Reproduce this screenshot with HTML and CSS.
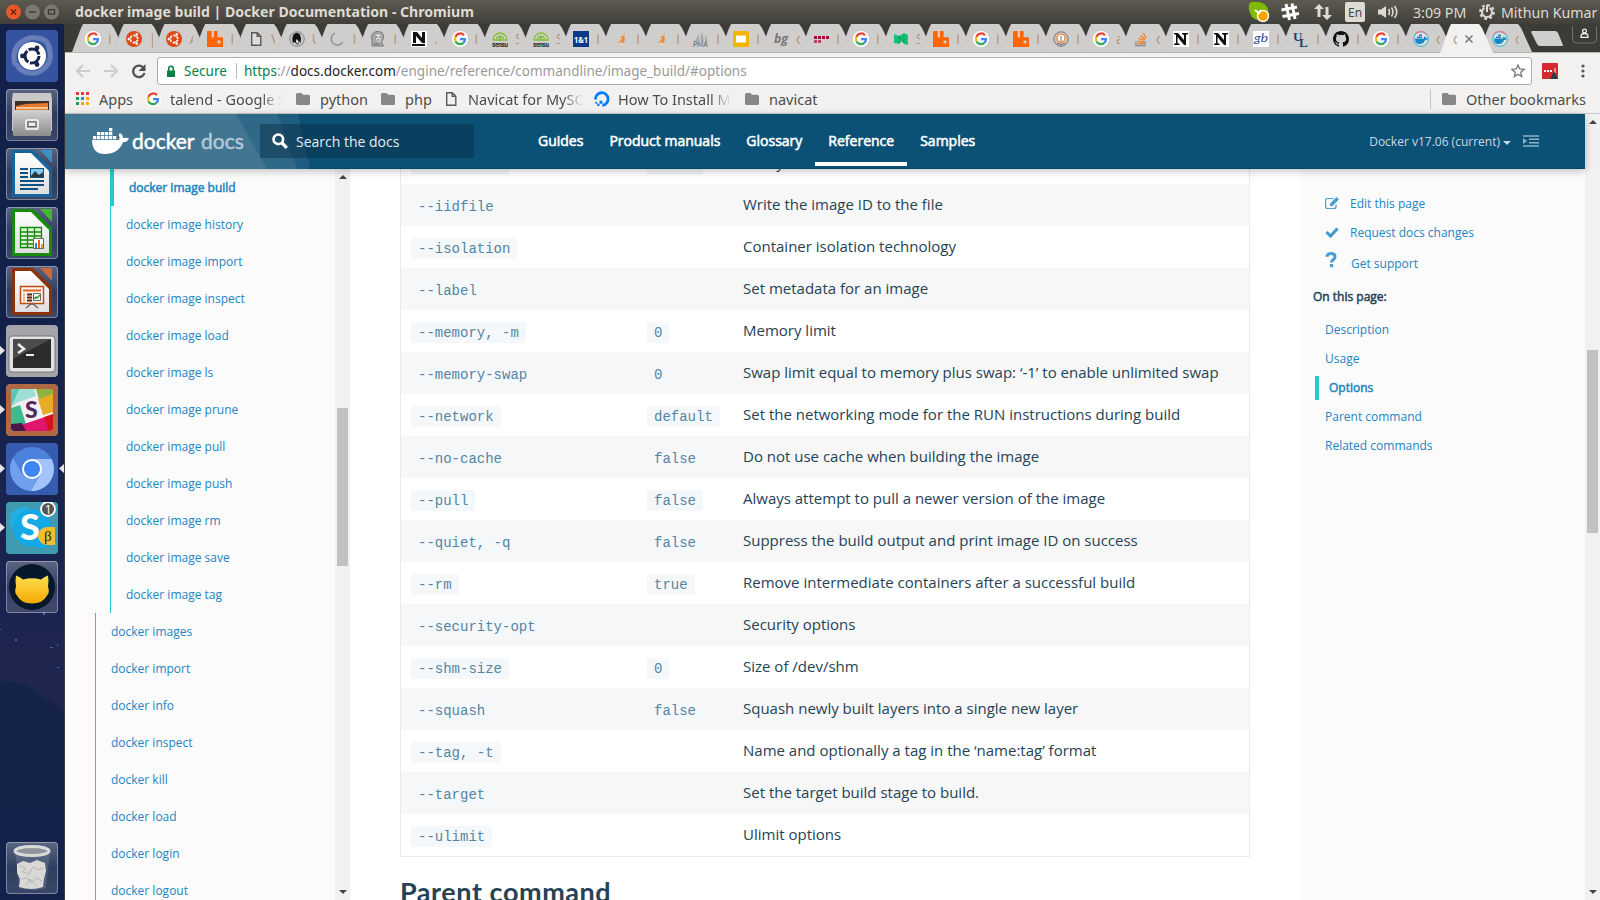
FILE: index.html
```html
<!DOCTYPE html>
<html lang="en">
<head>
<meta charset="utf-8">
<title>docker image build | Docker Documentation</title>
<link rel="stylesheet" href="styles.css">
</head>
<body>
<svg class="defs" width="0" height="0">
<defs>
<linearGradient id="metal" x1="0" y1="0" x2="0" y2="1"><stop offset="0" stop-color="#d2d2d2"/><stop offset="1" stop-color="#8c8c8c"/></linearGradient>
<linearGradient id="sheet" x1="0" y1="0" x2="0" y2="1"><stop offset="0" stop-color="#fff"/><stop offset="1" stop-color="#dedede"/></linearGradient>
<linearGradient id="gold" x1="0" y1="0" x2="0" y2="1"><stop offset="0" stop-color="#ffe050"/><stop offset="1" stop-color="#f5a800"/></linearGradient>
<symbol id="g" viewBox="0 0 16 16"><circle cx="8" cy="8" r="8" fill="#fff"/><g fill="none" stroke-width="2.3"><path d="M12 4.2A5 5 0 0 0 3.5 5.8" stroke="#ea4335"/><path d="M3.5 5.8a5 5 0 0 0 0 4.6" stroke="#fbbc05"/><path d="M3.5 10.4a5 5 0 0 0 7.8 1.5" stroke="#34a853"/><path d="M11.3 11.9A5 5 0 0 0 13 8.2H8" stroke="#4285f4"/></g></symbol>
<symbol id="ub" viewBox="0 0 16 16"><circle cx="8" cy="8" r="8" fill="#dd4814"/><circle cx="8" cy="8" r="3.7" fill="none" stroke="#fff" stroke-width="1.7" stroke-dasharray="6.4 1.35" stroke-dashoffset="-.7"/><g fill="#fff" stroke="#dd4814" stroke-width=".6"><circle cx="2.8" cy="8" r="1.6"/><circle cx="10.7" cy="3.4" r="1.6"/><circle cx="10.7" cy="12.6" r="1.6"/></g></symbol>
<symbol id="rb" viewBox="0 0 16 16"><path d="M1 0h3.6v6.6H7V0h3.6v6.2H16V16H0V1q0-1 1-1z" fill="#f60"/><rect x="10.5" y="9.5" width="3" height="3" rx=".8" fill="#d0cecd"/></symbol>
<symbol id="pg" viewBox="0 0 16 16"><path d="M3.7 1.7h5.6l3.5 3.5v9.1H3.7zM9.2 1.7v3.7h3.6" fill="#f3f3f3" fill-opacity=".4" stroke="#5a5a5a" stroke-width="1.4"/></symbol>
<symbol id="bird" viewBox="0 0 16 16"><circle cx="8" cy="8" r="7.3" fill="#c9c7c6" stroke="#888"/><path d="M4.500 3.500Q8 0 11 3.500l1 4-.5 4.500-1.500-2-1 4-3.500-3-1.500 1Q2.500 8 4.500 3.500z" fill="#111"/><path d="M7.500 8l2 2-1 3-1.500-2z" fill="#eee"/></symbol>
<symbol id="ld" viewBox="0 0 16 16"><path d="M6 2.2A6.2 6.2 0 1 0 13.8 11" fill="none" stroke="#999" stroke-width="1.7"/></symbol>
<symbol id="jk" viewBox="0 0 16 16"><path d="M2 15V9L1.500 6q1-6 7-5.500 6 .5 5 6.500l-2 4 2 4z" fill="#aaa" stroke="#666" stroke-width=".8"/><path d="M5 4q4-3 7 1l-1 6q-3 2-5-1z" fill="#ddd" stroke="#888" stroke-width=".7"/><path d="M6 6h2m1 0h2M7 9h3M4 13h5" stroke="#555" stroke-width=".8"/></symbol>
<symbol id="nb" viewBox="0 0 16 16"><path d="M0 0h16v16H0z" fill="#fff"/><path d="M2 12V1h4l5 6V1h3v11h-3L5 5v7zM1 13h13v2H1z" fill="#111"/></symbol>
<symbol id="ns" viewBox="0 0 16 16"><path d="M0 0h16v16H0z" fill="#fff"/><path d="M1 2h4l6 7V4l-2-1V2h6v1l-2 1v10h-2L4.500 6v6l2 1v1H1v-1l2-1V4L1 3z" fill="#111"/></symbol>
<symbol id="se" viewBox="0 0 16 16"><path d="M1 9a7 7 0 0 1 14 0zM4.500 8a3.6 3.600 0 0 1 7 0" fill="none" stroke="#86c036" stroke-width="1.300"/><path d="M8 5v5" stroke="#86c036" stroke-width="2"/><text x="0" y="15.500" font-size="6" font-weight="700" textLength="16" font-family="Inter" fill="#222">sensu</text></symbol>
<symbol id="oo" viewBox="0 0 16 16"><path d="M0 0h16v16H0z" fill="#0b3a8d"/><text x="1" y="11.500" font-size="9" font-weight="700" textLength="14" lengthAdjust="spacingAndGlyphs" font-family="Open Sans" fill="#fff">1&amp;1</text></symbol>
<symbol id="su" viewBox="0 0 16 16"><path d="M12 1l-1 4 1 3-1 4-3-1-3 2 2.500-4L9 7 7 5.500l3-.5z" fill="#ee8b38"/><path d="M1 14q6-2 11 0" stroke="#eed4b0" fill="none"/></symbol>
<symbol id="pm" viewBox="0 0 16 16"><path d="M2 10L6 3v7zM7 10L9 0l2 10zM12 10V4l3 6z" fill="#aaa"/><text x="0" y="15.500" font-size="7" font-weight="700" font-style="italic" font-family="Lato" fill="#777">PMA</text></symbol>
<symbol id="sl" viewBox="0 0 16 16"><rect width="16" height="16" rx="1.500" fill="#f4b400"/><path d="M3 4.500h10v7H3z" fill="#fff"/></symbol>
<symbol id="bg" viewBox="0 0 16 16"><text x="1" y="12" font-size="13" font-weight="700" font-style="italic" font-family="Open Sans" textLength="14" lengthAdjust="spacingAndGlyphs" fill="#777">bg</text></symbol>
<symbol id="dt" viewBox="0 0 16 16"><path d="M1 6.500h15" stroke="#b1083a" stroke-width="3" stroke-dasharray="3 1"/><path d="M1 10.500h7" stroke="#b1083a" stroke-width="3" stroke-dasharray="3 1" opacity=".7"/></symbol>
<symbol id="md" viewBox="0 0 16 16"><path d="M1 3l5 2 5-3 4 2v10l-4-1-2-3-3 3-5-1z" fill="#12c47a"/><path d="M6 5v7M6 5l5 7V4" stroke="#06994f" fill="none"/></symbol>
<symbol id="ey" viewBox="0 0 16 16"><circle cx="8" cy="8" r="7.200" fill="#e6b99a" stroke="#667b96"/><circle cx="8" cy="7" r="4" fill="#fff" stroke="#d98647"/><path d="M4 12q4 3 8 0M8 5v5" stroke="#596e85" fill="none"/></symbol>
<symbol id="so" viewBox="0 0 16 16"><path d="M3 10v4.500h9V10" fill="none" stroke="#8c8c8c" stroke-width="1.300"/><path d="M4.500 12.500H11M4.700 10.200l6.300.9M5.600 7.400l5.800 2M7.500 4.500l4.700 4M10.400 2l2.800 5" stroke="#f48024" stroke-width="1.300"/></symbol>
<symbol id="gb" viewBox="0 0 16 16"><path d="M0 0h16v16H0z" fill="#fff"/><text x="1" y="11" font-size="11" font-style="italic" font-family="Lato" textLength="14" lengthAdjust="spacingAndGlyphs" fill="#2d4f94">gb</text></symbol>
<symbol id="ul" viewBox="0 0 16 16"><text x="0" y="10" font-size="13" font-weight="700" font-family="Liberation Serif" fill="#223f6c">U</text><text x="6" y="16" font-size="13" font-weight="700" font-family="Liberation Serif" fill="#223f6c">L</text></symbol>
<symbol id="gh" viewBox="0 0 16 16"><path fill="#111" d="M8 0C3.580 0 0 3.580 0 8c0 3.540 2.290 6.530 5.470 7.590.4.070.55-.17.55-.38v-1.490c-2.010.37-2.530-.49-2.690-.94-.09-.23-.48-.94-.82-1.130-.28-.15-.68-.52-.01-.53.63-.01 1.080.58 1.230.82.72 1.210 1.870.87 2.330.66.070-.52.28-.87.51-1.070-1.780-.2-3.640-.89-3.640-3.950 0-.87.31-1.590.82-2.150-.08-.2-.36-1.020.080-2.120 0 0 .67-.21 2.200.82a7.600 7.600 0 0 1 4 0c1.530-1.040 2.200-.82 2.200-.82.44 1.100.16 1.920.080 2.120.51.56.82 1.270.82 2.150 0 3.070-1.870 3.750-3.650 3.950.29.25.54.73.54 1.480v2.200c0 .21.15.46.55.38A8 8 0 0 0 16 8c0-4.420-3.580-8-8-8z"/></symbol>
<symbol id="dk" viewBox="0 0 16 16"><circle cx="8" cy="8" r="7.300" fill="#e6e2e0" stroke="#42bfd0" stroke-width="1.200"/><path d="M2 3a7.300 7.300 0 0 1 11 0" fill="none" stroke="#d9829a" stroke-width="1.400"/><path d="M2 7.500h9q0-2 1-2.500l1 2 2 .5q-1 1.500-3 1.500-1 4-5.500 4Q2 13 2 7.500zM4 5.500h5v1.600H4zM6 3.600h3v1.500H6z" fill="#1488c6"/></symbol>
<symbol id="fo" viewBox="0 0 16 16"><path d="M1 3.500Q1 2 2.500 2h4L8 3.700h5.500q1.500 0 1.500 1.500v7.300q0 1.500-1.500 1.500h-11Q1 14 1 12.500z" fill="#878787"/></symbol>
<symbol id="do" viewBox="0 0 16 16"><path d="M1.500 8.500a6.300 6.300 0 1 1 6.800 5.800" fill="none" stroke="#0080ff" stroke-width="2.800"/><path d="M5.500 9.800h3v3h-3zM3.200 12.700h2.300V15H3.200zM1.300 10.800h1.900v1.900H1.300z" fill="#0080ff"/></symbol>
</defs>
</svg>
<div class="desktop">
  <header class="panel">
    <div class="win-buttons">
      <svg width="54" height="18" viewBox="0 0 54 18"><circle cx="7.500" cy="9" r="7.500" fill="#e8592c"/><path d="M5 6.500l5 5m0-5l-5 5" stroke="#5e2310" stroke-width="1.300"/><circle cx="26.500" cy="9" r="7.500" fill="#7b786f"/><path d="M23 9h7" stroke="#3a3935" stroke-width="1.400"/><circle cx="45.500" cy="9" r="7.500" fill="#7b786f"/><path d="M42.500 6.700h6v4.500h-6z" fill="none" stroke="#3a3935" stroke-width="1.300"/></svg>
    </div>
    <div class="win-title">docker image build | Docker Documentation - Chromium</div>
    <div class="tray">
      <svg width="22" height="22" viewBox="0 0 22 22"><path d="M1 4Q2 0 7 1q10-1 13 7 2 8-4 12Q4 20 2 12 0 8 1 4z" fill="#7fba00"/><circle cx="15" cy="15" r="5.500" fill="#faa200" stroke="#fff" stroke-width="1.400"/><path d="M7 9l4 3 2-3" stroke="#fff" stroke-width="2" fill="none"/></svg>
      <svg class="t-hash" width="20" height="20" viewBox="0 0 20 20"><path d="M6 2l3.500 16M12 1.500L15 17M1.500 8L17 5M2.500 14.500L19 11.500" stroke="#fff" stroke-width="3"/></svg>
      <svg class="t-net" width="18" height="16" viewBox="0 0 18 16"><path d="M5 0l5 5H6.500v8h-3V5H0zM13 16l-5-5h3.500V3h3v8H18z" fill="#dfdbd2"/></svg>
      <span class="lang">En</span>
      <svg class="t-vol" width="20" height="16" viewBox="0 0 20 16"><path d="M0 5.500h3L8 2v12l-5-3.500H0z" fill="#dfdbd2"/><path d="M10.500 5q2 3 0 6M13.500 3.500q3 4.500 0 9M16.500 2q4.500 6 0 12" fill="none" stroke="#dfdbd2" stroke-width="1.600"/></svg>
      <span class="clock">3:09 PM</span>
      <svg class="t-gear" width="16" height="16" viewBox="0 0 16 16"><circle cx="8" cy="8" r="6.800" fill="none" stroke="#dfdbd2" stroke-width="2.200" stroke-dasharray="2.700 2.640"/><path d="M5.500 3.800a5 5 0 1 0 5 0M8 1v7" fill="none" stroke="#dfdbd2" stroke-width="2"/></svg>
      <span class="user">Mithun Kumar</span>
    </div>
  </header>
  <div class="below">
    <aside class="launcher">
      <svg class="tile" viewBox="0 0 52 52"><rect width="52" height="52" rx="4" fill="#3553a1"/><g fill="none" stroke="#fff" opacity=".25" stroke-width="5"><path d="M9 35Q4 14 24 8q18-2 20 12M42 15q8 20-12 28Q16 45 10 34"/></g><circle cx="26" cy="26" r="14" fill="#fff"/><circle cx="26" cy="26" r="7" fill="none" stroke="#17264f" stroke-width="3" stroke-dasharray="13 1.660"/><g fill="#17264f"><circle cx="16.500" cy="26" r="2.400"/><circle cx="31" cy="18" r="2.400"/><circle cx="31" cy="34.500" r="2.400"/></g></svg>
      <svg class="tile glass" viewBox="0 0 52 52"><path d="M7 4h38l1 6v32H6V10z" fill="#c8c8c8"/><path d="M9 12h34v12H9z" fill="#3c3028"/><path d="M10 17l10-2 22-1v8H10z" fill="#e2792c"/><path d="M10 19h32" stroke="#ffe1b4" stroke-width="1.500"/><rect x="7" y="21" width="38" height="26" rx="1" fill="url(#metal)"/><rect x="20" y="31" width="12" height="9" rx="1.500" fill="none" stroke="#e8e8e8" stroke-width="2"/><rect x="22" y="33" width="8" height="4.500" fill="#eee" stroke="#555"/></svg>
      <svg class="tile glass" viewBox="0 0 52 52"><path d="M6 2h21l19 19v28H6z" fill="#14659b"/><path d="M34 2h12v13z" fill="#3b91c4"/><path d="M9 5h16l18 18v23H9z" fill="url(#sheet)"/><path d="M14 21h8M14 25h8M14 29h8M14 33h24M14 37h24M14 41h18" stroke="#0e5284" stroke-width="2"/><path d="M24 20h14v10H24z" fill="#0e5284"/><path d="M25 29l4-5 3 3 3-2 2 4z" fill="#333"/><path d="M25 21h12v3l-4 3-4-4-4 5z" fill="#83cbe9"/></svg>
      <svg class="tile glass" viewBox="0 0 52 52"><path d="M6 2h21l19 19v28H6z" fill="#188a0e"/><path d="M34 2h12v13z" fill="#43b82c"/><path d="M9 5h16l18 18v23H9z" fill="url(#sheet)"/><path d="M14.500 20.500h21v20h-21zM14.500 25h21M14.500 29h21M14.500 33h21M14.500 37h21M21.500 20v20M28.500 20v20" fill="#dff3d5" stroke="#138a0c" stroke-width="1.300"/><path d="M27.500 31.500h10v10h-10z" fill="#fff" stroke="#666"/><path d="M29 36h2v5h-2z" fill="#2e83c4"/><path d="M32 33h2v8h-2z" fill="#e5641e"/><path d="M35 37h2v4h-2z" fill="#e5a51e"/></svg>
      <svg class="tile glass" viewBox="0 0 52 52"><path d="M6 2h21l19 19v28H6z" fill="#8a3208"/><path d="M34 2h12v13z" fill="#c96a3a"/><path d="M9 5h16l18 18v23H9z" fill="url(#sheet)"/><path d="M14.500 20.500h23v17h-23z" fill="#fff4ee" stroke="#bf4d10" stroke-width="1.500"/><path d="M17 24.500h18" stroke="#e0672e" stroke-width="2"/><path d="M17 28.500h2M17 31.500h2M17 34.500h2" stroke="#eca27c" stroke-width="2"/><path d="M21 28.500h5M21 31.500h5M21 34.500h5" stroke="#5b2206" stroke-width="2"/><path d="M27.500 27.500h7v7h-7z" fill="#fff" stroke="#666"/><path d="M28 33l2-2 1 1 3-3" stroke="#2c9b2c" fill="none" stroke-width="1.500"/><path d="M20 42l5-4h2l5 4" stroke="#666" stroke-width="1.500" fill="none"/></svg>
      <svg class="tile" viewBox="0 0 52 52"><rect width="52" height="52" rx="4" fill="#a5a4ab"/><rect x="3" y="11" width="46" height="36" rx="3" fill="#e2e2e2" stroke="#777"/><rect x="7" y="14" width="38" height="29" fill="#2c2d2b"/><path d="M7 14h38L7 34z" fill="#4b4c4a"/><path d="M12 19l6 5-6 4" fill="none" stroke="#eee" stroke-width="2.500"/><path d="M20 30h8" stroke="#eee" stroke-width="2"/></svg>
      <svg class="tile" viewBox="0 0 52 52"><rect width="52" height="52" rx="4" fill="#b06743"/><path d="M8 5h36q3 0 3 3v36q0 3-3 3H8q-3 0-3-3V8q0-3 3-3z" fill="#f4eff2"/><path d="M8 5h6l-9 19V8q0-3 3-3z" fill="#58c5bb"/><path d="M13 5h15l2 7-17 6-7 4z" fill="#9fddd5"/><path d="M5 24l9-3 6 19-15 1z" fill="#3eb991"/><path d="M30 5h14q3 0 3 3v3l-14 5z" fill="#8db440"/><path d="M32 15l15-5v18l-10 3z" fill="#e8ad25"/><path d="M15 41l24-8 5 14H19z" fill="#e0156c"/><path d="M38 33l9-3v14q0 3-3 3h-1z" fill="#d3121b"/><path d="M5 40l11-1 4 8H8q-3 0-3-3z" fill="#4a1549"/><text x="19" y="34" font-family="Lato" font-size="23" font-weight="900" fill="#532953">S</text></svg>
      <svg class="tile" viewBox="0 0 52 52"><rect width="52" height="52" rx="4" fill="#355cae"/><circle cx="26" cy="26" r="22" fill="#4c82dc"/><path d="M7 15A22 22 0 0 0 25 48l9-17H16z" fill="#709fee"/><path d="M26 16h19.500A22 22 0 0 1 25 48l10-18z" fill="#a3c3fa"/><circle cx="26" cy="26" r="10" fill="#fff"/><circle cx="26" cy="26" r="8" fill="#3f86f5"/></svg>
      <svg class="tile" viewBox="0 0 52 52"><rect width="52" height="52" rx="4" fill="#419bb0"/><circle cx="17" cy="18" r="13" fill="#25aee2"/><circle cx="35" cy="34" r="12" fill="#0caae6"/><circle cx="26" cy="26" r="19" fill="#14a9e4"/><text x="14" y="38" font-family="Lato" font-size="36" font-weight="900" fill="#fff">S</text><path d="M41 25h8v18h-8a9 9 0 0 1 0-18z" fill="#f0bd2c"/><text x="38" y="39" font-family="Liberation Serif" font-size="15" fill="#222">β</text><circle cx="42" cy="7" r="7" fill="#555" stroke="#fff" stroke-width="1.800"/><text x="38.800" y="11.500" font-family="Open Sans" font-size="12" fill="#fff">1</text></svg>
      <svg class="tile glass" viewBox="0 0 52 52"><circle cx="26" cy="26" r="23" fill="#07182b"/><path d="M10 14.500q4 1.500 7 4 9-2.500 18 0 3-2.500 7-4 1 5 0 11 2 6-1 9-4 8-15 8t-15-8q-3-3-1-9-1-6 0-11z" fill="url(#gold)"/></svg>
      <svg class="tile glass trash" viewBox="0 0 52 52"><path d="M9 9h35l-4 37q-14 4-27 0z" fill="#c5cde0" opacity=".18"/><path d="M11 22l6-3 7 2 7-3 8 3 1 8-2 8-1 8q-11 4-24 0l1-8-3-6z" fill="#d8d8d5"/><path d="M14 24l5 2-2 4 6 2 4-7 5 3 5-2M15 37l6-1 4 5 6-5 5 3M20 43l4-6 7 7" stroke="#b5b5b0" fill="none"/><ellipse cx="26" cy="9" rx="17" ry="4.500" fill="#8e939d" stroke="#d9d9d5" stroke-width="3"/></svg>
      <svg class="pips" width="65" height="300" viewBox="0 0 65 300"><path d="M0 21l5 4.500L0 30zM0 80l5 4.500L0 89zM0 139l5 4.500L0 148zM0 198l5 4.500L0 207zM64 139l-5 4.500 5 4.500z" fill="#e6e6e6"/></svg>
      <svg class="stars" width="64" height="290" viewBox="0 0 64 290"><path d="M0 72q20-4 38 11l26 18v189H0z" fill="#12234a" opacity=".75"/><g fill="#42699e"><path d="M15 29h2v2h-2zM57 34h1v2h-1zM50 37h3v1h-3zM43 2h2v3h-2zM57 57h2v1h-2zM0 19h1v1H0z"/></g></svg>
    </aside>
    <main class="browser">
      <div class="tabs">
        <div class="tab"><svg><use href="#g"/></svg><i>i</i></div><div class="tab"><svg><use href="#ub"/></svg><i>|</i></div><div class="tab"><svg><use href="#ub"/></svg><i>A</i></div><div class="tab"><svg><use href="#rb"/></svg><i>I</i></div><div class="tab"><svg><use href="#pg"/></svg><i>V</i></div><div class="tab"><svg><use href="#bird"/></svg><i>U</i></div><div class="tab"><svg><use href="#ld"/></svg><i>I</i></div><div class="tab"><svg><use href="#jk"/></svg><i>I</i></div><div class="tab"><svg><use href="#nb"/></svg><i>.</i></div><div class="tab"><svg><use href="#g"/></svg><i>i</i></div><div class="tab"><svg><use href="#se"/></svg><i>S</i></div><div class="tab"><svg><use href="#se"/></svg><i>S</i></div><div class="tab"><svg><use href="#oo"/></svg><i>I</i></div><div class="tab"><svg><use href="#su"/></svg><i>I</i></div><div class="tab"><svg><use href="#su"/></svg><i>I</i></div><div class="tab"><svg><use href="#pm"/></svg><i>I</i></div><div class="tab"><svg><use href="#sl"/></svg><i>I</i></div><div class="tab"><svg><use href="#bg"/></svg><i>c</i></div><div class="tab"><svg><use href="#dt"/></svg><i>I</i></div><div class="tab"><svg><use href="#g"/></svg><i>i</i></div><div class="tab"><svg><use href="#md"/></svg><i>S</i></div><div class="tab"><svg><use href="#rb"/></svg><i>I</i></div><div class="tab"><svg><use href="#g"/></svg><i>i</i></div><div class="tab"><svg><use href="#rb"/></svg><i>I</i></div><div class="tab"><svg><use href="#ey"/></svg><i>I</i></div><div class="tab"><svg><use href="#g"/></svg><i>a</i></div><div class="tab"><svg><use href="#so"/></svg><i>c</i></div><div class="tab"><svg><use href="#ns"/></svg><i>I</i></div><div class="tab"><svg><use href="#ns"/></svg><i>I</i></div><div class="tab"><svg><use href="#gb"/></svg><i>I</i></div><div class="tab"><svg><use href="#ul"/></svg><i>I</i></div><div class="tab"><svg><use href="#gh"/></svg><i>I</i></div><div class="tab"><svg><use href="#g"/></svg><i>I</i></div><div class="tab"><svg><use href="#dk"/></svg><i>c</i></div><div class="tab active"><i>d</i><svg class="x" viewBox="0 0 8 8"><path d="M.5.500l7 7m0-7l-7 7" stroke="#777" stroke-width="1.500"/></svg></div><div class="tab"><svg><use href="#dk"/></svg><i>c</i></div>
        <svg class="newtab" width="33" height="16" viewBox="0 0 33 16"><path d="M1 0h23q2 0 3 2l5 12q0 1-1 1H9q-2 0-3-2L0 1z" fill="#d0cecd"/></svg>
        <svg class="person" width="25" height="18" viewBox="0 0 25 18"><path d="M.5 0v13q0 4 4 4h16q4 0 4-4V0" fill="#3c3b37" stroke="#73716b"/><path d="M9 10.500q0-3 3.500-3t3.500 3v.8H9z" fill="none" stroke="#f0f0f0" stroke-width="1.300"/><circle cx="12.500" cy="5" r="1.900" fill="none" stroke="#f0f0f0" stroke-width="1.300"/></svg>
      </div>
      <div class="toolbar">
        <svg class="tb" width="75" height="16" viewBox="0 0 75 16"><path d="M15 8H2m6-6L2 8l6 6M29 8h13m-6-6l6 6-6 6" fill="none" stroke="#cfcdcb" stroke-width="2"/><path d="M68 4.200A5.800 5.800 0 1 0 69.500 10" fill="none" stroke="#505050" stroke-width="2.300"/><path d="M70.500 1v7h-7z" fill="#505050"/></svg>
        <div class="omnibox">
          <svg width="10" height="13" viewBox="0 0 10 13"><path d="M1 5.500h8V12H1z" fill="#0b8043"/><path d="M2.700 6V3.600a2.300 2.300 0 0 1 4.600 0V6" fill="none" stroke="#0b8043" stroke-width="1.500"/></svg>
          <span class="secure">Secure</span><span class="vbar"></span>
          <span class="url"><b>https</b>://<em>docs.docker.com</em>/engine/reference/commandline/image_build/#options</span>
          <svg class="star" width="14" height="14" viewBox="0 0 14 14"><path d="M7 1l1.700 4 4.300.4-3.300 2.800 1 4.300L7 10.200l-3.700 2.300 1-4.300L1 5.400 5.300 5z" fill="none" stroke="#777" stroke-width="1.300"/></svg>
        </div>
        <svg class="ext" width="16" height="16" viewBox="0 0 16 16"><rect width="16" height="16" rx="1" fill="#d6282d"/><path d="M2 8h9" stroke="#fff" stroke-width="2" stroke-dasharray="2 1"/><path d="M13 5v5" stroke="#fff"/><path d="M12 8l4 8H8z" fill="#2c3c48"/></svg>
        <svg class="dots" width="4" height="16" viewBox="0 0 4 16"><g fill="#555"><circle cx="2" cy="3" r="1.600"/><circle cx="2" cy="8" r="1.600"/><circle cx="2" cy="13" r="1.600"/></g></svg>
      </div>
      <div class="bookmarks">
        <svg class="apps" width="13" height="13" viewBox="0 0 13 13"><path d="M0 0h3v3H0zM5 0h3v3H5zM10 0h3v3h-3z" fill="#e53935"/><path d="M0 5h3v3H0z" fill="#1e9e50"/><path d="M5 5h3v3H5z" fill="#3580ef"/><path d="M10 5h3v3h-3zM10 10h3v3h-3zM5 10h3v3H5z" fill="#f4a900"/><path d="M0 10h3v3H0z" fill="#1e9e50"/></svg>
        <span class="bm apps-l">Apps</span>
        <svg class="ic"><use href="#g"/></svg><span class="bm fade b-talend">talend - Google S</span>
        <svg class="ic"><use href="#fo"/></svg><span class="bm b-python">python</span>
        <svg class="ic"><use href="#fo"/></svg><span class="bm b-php">php</span>
        <svg class="ic"><use href="#pg"/></svg><span class="bm fade b-nav">Navicat for MySQ</span>
        <svg class="ic do"><use href="#do"/></svg><span class="bm fade b-how">How To Install My</span>
        <svg class="ic"><use href="#fo"/></svg><span class="bm b-navicat">navicat</span>
        <span class="other"><svg class="ic"><use href="#fo"/></svg><span class="bm">Other bookmarks</span></span>
      </div>
      <div class="view">
        <div class="site">
          <div class="topbar">
            <svg class="wedges" width="260" height="55" viewBox="0 0 260 55"><path d="M0 0h233l12 55H0z" fill="#1f5d80"/><path d="M0 0h212l20 55H0z" fill="#306887"/><path d="M0 0h171l31 55H0z" fill="#427592"/></svg>
            <svg class="whale" width="37" height="28" viewBox="0 0 37 28"><path d="M0 13h26.500q2-1.500.3-5l1-2q3.500 2 3.200 5 3-.8 6 .3-1.500 4-6 4Q26.500 27 13 27 0 27 0 13z" fill="#fff"/><path d="M1 9h3.300v3.300H1zM5 9h3.300v3.300H5zM9 9h3.300v3.300H9zM13 9h3.300v3.300H13zM17 9h3.300v3.300H17zM21 9h3.300v3.300H21zM5 5h3.300v3.300H5zM9 5h3.300v3.300H9zM13 5h3.300v3.300H13zM17 5h3.300v3.300H17zM17 1h3.300v3.300H17z" fill="#fff"/></svg>
            <span class="brand">docker</span><span class="brand docs">docs</span>
            <div class="search"><svg width="16" height="16" viewBox="0 0 16 16"><circle cx="6.300" cy="6.300" r="4.800" fill="none" stroke="#fff" stroke-width="2.600"/><path d="M10 10l4.800 4.800" stroke="#fff" stroke-width="3.200"/></svg><span>Search the docs</span></div>
            <nav><a>Guides</a><a>Product manuals</a><a>Glossary</a><a class="on">Reference</a><a>Samples</a></nav>
            <span class="version">Docker v17.06 (current)</span><span class="caret"></span>
            <svg class="indent" width="16" height="12" viewBox="0 0 16 12"><path d="M0 1h16M6 4.300h10M6 7.700h10M0 11h16" stroke="#8fb3c7" stroke-width="1.600"/><path d="M0 3l4 3-4 3z" fill="#8fb3c7"/></svg>
          </div>
          <div class="body">
            <div class="side">
              <ul class="deep"><li class="cur">docker image build</li><li>docker image history</li><li>docker image import</li><li>docker image inspect</li><li>docker image load</li><li>docker image ls</li><li>docker image prune</li><li>docker image pull</li><li>docker image push</li><li>docker image rm</li><li>docker image save</li><li>docker image tag</li></ul>
              <ul class="shallow"><li>docker images</li><li>docker import</li><li>docker info</li><li>docker inspect</li><li>docker kill</li><li>docker load</li><li>docker login</li><li>docker logout</li></ul>
            </div>
            <div class="sbar sbar-side"><span class="up"></span><span class="thumb"></span><span class="down"></span></div>
            <div class="content">
              <div class="opts">
                <div class="row"><span><code>--force-rm</code></span><span><code>false</code></span><span>Always remove intermediate containers</span></div>
                <div class="row"><span><code>--iidfile</code></span><span></span><span>Write the image ID to the file</span></div>
                <div class="row"><span><code>--isolation</code></span><span></span><span>Container isolation technology</span></div>
                <div class="row"><span><code>--label</code></span><span></span><span>Set metadata for an image</span></div>
                <div class="row"><span><code>--memory, -m</code></span><span><code>0</code></span><span>Memory limit</span></div>
                <div class="row"><span><code>--memory-swap</code></span><span><code>0</code></span><span>Swap limit equal to memory plus swap: ‘-1’ to enable unlimited swap</span></div>
                <div class="row"><span><code>--network</code></span><span><code>default</code></span><span>Set the networking mode for the RUN instructions during build</span></div>
                <div class="row"><span><code>--no-cache</code></span><span><code>false</code></span><span>Do not use cache when building the image</span></div>
                <div class="row"><span><code>--pull</code></span><span><code>false</code></span><span>Always attempt to pull a newer version of the image</span></div>
                <div class="row"><span><code>--quiet, -q</code></span><span><code>false</code></span><span>Suppress the build output and print image ID on success</span></div>
                <div class="row"><span><code>--rm</code></span><span><code>true</code></span><span>Remove intermediate containers after a successful build</span></div>
                <div class="row"><span><code>--security-opt</code></span><span></span><span>Security options</span></div>
                <div class="row"><span><code>--shm-size</code></span><span><code>0</code></span><span>Size of /dev/shm</span></div>
                <div class="row"><span><code>--squash</code></span><span><code>false</code></span><span>Squash newly built layers into a single new layer</span></div>
                <div class="row"><span><code>--tag, -t</code></span><span></span><span>Name and optionally a tag in the ‘name:tag’ format</span></div>
                <div class="row"><span><code>--target</code></span><span></span><span>Set the target build stage to build.</span></div>
                <div class="row"><span><code>--ulimit</code></span><span></span><span>Ulimit options</span></div>
              </div>
              <h2>Parent command</h2>
            </div>
            <div class="toc">
              <div class="act"><svg width="14" height="13" viewBox="0 0 14 13"><path d="M11 7.500v2q0 2-2 2H2.600q-2 0-2-2v-6q0-2 2-2H8.500" fill="none" stroke="#4a9fd3" stroke-width="1.200"/><path d="M5 9V6.500L11.500 0 14 2.500 7.500 9z" fill="#4a9fd3"/></svg><span>Edit this page</span></div>
              <div class="act"><svg width="14" height="13" viewBox="0 0 14 13"><path d="M1.500 6l4 4 7-7.500" fill="none" stroke="#3f98d0" stroke-width="3"/></svg><span>Request docs changes</span></div>
              <div class="act sup"><svg width="14" height="16" viewBox="0 0 14 16"><path d="M1.800 4.800Q2.500 1.500 6 1.500q4 0 4 3.200 0 2-2 3.200Q6.500 8.800 6.500 10.500" fill="none" stroke="#4a9fd3" stroke-width="3"/><path d="M4.900 12h3.300v3.200H4.900z" fill="#4a9fd3"/></svg><span>Get support</span></div>
              <div class="otp">On this page:</div>
              <ul><li>Description</li><li>Usage</li><li class="sel">Options</li><li>Parent command</li><li>Related commands</li></ul>
            </div>
          </div>
        </div>
        <div class="sbar sbar-main"><span class="up"></span><span class="thumb"></span><span class="down"></span></div>
      </div>
    </main>
  </div>
</div>
</body>
</html>
```
FILE: styles.css
```css
* { box-sizing: border-box; }
body { margin: 0; width: 1600px; height: 900px; overflow: hidden; font-family: "Open Sans", sans-serif; }
.defs { position: absolute; }
ul { list-style: none; margin: 0; padding: 0; }
svg { flex: none; display: block; }
.desktop { width: 1600px; height: 900px; display: flex; flex-direction: column; }

.panel { height: 24px; flex: none; display: flex; align-items: center; background: linear-gradient(#5c5a50, #413f3a); color: #dfdbd2; padding: 0 6px; }
.win-buttons { width: 69px; }
.win-title { font: 700 14.1px/24px "Noto Sans", sans-serif; white-space: nowrap; flex: 1; }
.tray { display: flex; align-items: center; font: 14.2px/23px "Noto Sans", sans-serif; white-space: nowrap; }
.t-hash { margin-left: 10px; }
.t-net { margin-left: 14px; }
.lang { margin-left: 13px; width: 20px; height: 20px; border-radius: 2px; background: #dfdbd2; color: #444; font-size: 12px; line-height: 21px; text-align: center; }
.t-vol { margin-left: 13px; }
.clock { margin-left: 15px; width: 53px; }
.t-gear { margin-left: 13px; }
.user { margin-left: 6px; width: 93px; }

.below { flex: 1; display: flex; min-height: 0; }
.launcher { width: 65px; flex: none; position: relative; display: flex; flex-direction: column; gap: 7px; padding: 6px 0 6px 6px; background: linear-gradient(#12204a, #13224a 30%, #1a2450 65%, #20264f 76%, #1a2349 82%, #14234c); border-right: 1px solid #3d3a38; }
.tile { width: 52px; height: 52px; z-index: 1; border-radius: 4px; box-shadow: inset 0 0 0 1px rgba(255, 255, 255, .35); }
.glass { background: linear-gradient(rgba(255, 255, 255, .3), rgba(255, 255, 255, .12) 50%, rgba(255, 255, 255, .17)); }
.trash { margin-top: auto; }
.pips { position: absolute; left: 0; top: 301px; z-index: 2; }
.stars { position: absolute; left: 0; bottom: 0; }

.browser { flex: 1; min-width: 0; display: flex; flex-direction: column; background: #f2f1f0; }
.tabs { height: 29px; flex: none; display: flex; align-items: flex-end; padding-left: 7px; background: #3c3b37; border-bottom: 1px solid #b8b5b2; }
.tab { flex: none; width: 54px; height: 28px; margin-right: -14px; padding: 1px 0 0 13px; display: flex; align-items: center; background: linear-gradient(112deg, #a9a6a4 0, #d0cecd 12px); clip-path: polygon(0 100%, 9px 4px, 11px 0, 39px 0, 42px 4px, 53px 100%); }
.tab:nth-child(-n+11) { margin-right: -13.27px; }
.tab svg { width: 16px; height: 16px; }
.tab i { font: 14px/20px "Open Sans", sans-serif; color: #b09480; width: 4px; margin-left: 7px; overflow: hidden; }
.tab.active { width: 53px; height: 29px; margin: 0 -14px -1px 0; background: #f2f1f0; z-index: 1; padding-left: 13px; }
.tab.active i { margin: 0 8px 0 0; }
.tab.active .x { width: 8px; height: 8px; }
.newtab { margin: 0 0 5px 12px; }
.person { margin: 0 0 8px 8px; }

.toolbar { height: 36px; flex: none; display: flex; align-items: center; padding-left: 10px; }
.tb { margin-right: 7px; }
.omnibox { width: 1375px; height: 28px; display: flex; align-items: center; background: #fff; border: 1px solid #b0aeac; border-radius: 3px; padding-left: 8px; font: 13.53px/26px "Noto Sans", sans-serif; white-space: nowrap; }
.secure { margin-left: 8px; width: 43px; color: #0b8043; }
.vbar { width: 1px; height: 16px; background: #bbb; margin: 0 7px 0 9px; }
.url { color: #9a9a9a; }
.url b { font-weight: 400; color: #0b8043; }
.url em { font-style: normal; color: #222; }
.star { margin-left: auto; margin-right: 6px; }
.ext { margin-left: 10px; }
.dots { margin-left: 23px; }

.bookmarks { height: 25px; flex: none; display: flex; align-items: center; padding: 0 14px 5px 11px; border-bottom: 1px solid #cccac8; font: 14.5px/20px "Noto Sans", sans-serif; color: #4c4c4c; white-space: nowrap; }
.apps { margin-right: 10px; }
.ic { width: 16px; height: 16px; margin-right: 9px; }
.ic.do { margin-right: 8px; }
.fade { overflow: hidden; -webkit-mask-image: linear-gradient(90deg, #000 82%, transparent); }
.apps-l { width: 46px; }
.b-talend { width: 112px; margin-right: 13px; }
.b-python { width: 60px; }
.b-php { width: 38px; }
.b-nav { width: 115px; margin-right: 11px; }
.b-how { width: 113px; margin-right: 13px; }
.other { margin-left: auto; display: flex; align-items: center; border-left: 1px solid #c8c6c4; padding-left: 10px; }

.view { flex: 1; min-height: 0; display: flex; background: #fff; }
.site { width: 1520px; display: flex; flex-direction: column; }
.topbar { height: 55px; flex: none; position: relative; z-index: 3; display: flex; align-items: center; background: #0b5175; border-bottom: 1px solid #094766; box-shadow: 0 2px 8px rgba(0, 0, 0, .25); color: #fff; white-space: nowrap; }
.wedges { position: absolute; left: 0; top: 0; }
.whale { position: relative; margin-left: 27px; }
.brand { position: relative; margin-left: 3px; width: 63px; font: 400 21px/30px Lato, sans-serif; -webkit-text-stroke: .5px; }
.docs { margin-left: 6px; width: 42px; color: #b2c9d5; }
.search { position: relative; margin-left: 17px; width: 214px; height: 34px; display: flex; align-items: center; padding-left: 12px; background: rgba(7, 40, 64, .42); font-size: 14px; color: #e6edf1; }
.search span { margin-left: 8px; }
nav { margin-left: 51px; height: 54px; display: flex; }
nav a { padding: 0 13px; font-size: 14px; line-height: 53px; -webkit-text-stroke: .55px; }
nav .on { background: linear-gradient(#fff, #fff) 0 48px / 100% 4px no-repeat; }
.version { margin-left: auto; font-size: 12px; line-height: 20px; margin-top: 2px; color: #c6dae5; }
.caret { margin: 4px 12px 0 3px; border: 4px solid transparent; border-top-color: #c6dae5; border-bottom: 0; }
.indent { margin-right: 46px; }

.body { flex: 1; min-height: 0; display: flex; overflow: hidden; }
.side { width: 270px; background: #fbfbfb; font-size: 12px; color: #2384c2; overflow: hidden; }
.side li { height: 37px; line-height: 38px; padding-left: 15px; }
.deep { margin-left: 45px; border-left: 1px solid #22cccb; }
.side .cur { margin-left: -1px; border-left: 4px solid #22cccb; -webkit-text-stroke: .5px; }
.shallow { margin-left: 30px; border-left: 1px solid #22cccb; }

.sbar { width: 15px; flex: none; background: #f1f1f1; display: flex; flex-direction: column; align-items: center; }
.thumb { width: 11px; background: #c1c1c1; }
.up { border: 4px solid transparent; border-bottom-color: #444; border-top: 0; }
.down { border: 4px solid transparent; border-top-color: #444; border-bottom: 0; margin-top: auto; margin-bottom: 6px; }
.sbar-side .up { margin-top: 6px; }
.sbar-side .thumb { margin-top: 229px; height: 158px; }
.sbar-main .up { margin-top: 6px; }
.sbar-main .thumb { margin-top: 226px; height: 183px; }

.content { width: 950px; padding-left: 50px; overflow: hidden; }
.opts { width: 850px; margin-top: -27px; border: 1px solid #e8eaeb; border-top: 0; }
.row { height: 42px; display: grid; grid-template-columns: 236px 96px 1fr; padding-left: 10px; font-size: 15px; line-height: 41px; color: #254356; white-space: nowrap; }
.row:nth-child(even) { background: #f7f7f7; }
code { display: inline-block; height: 21px; padding: 0 7px; margin-top: 12px; border-radius: 2px; background: #f5f8fa; color: #5484a5; font: 14px/22px "Liberation Mono", monospace; vertical-align: top; }
h2 { margin: 17px 0 0 0; font: 700 27px/36px Lato, sans-serif; letter-spacing: .55px; color: #254356; white-space: nowrap; }

.toc { width: 285px; background: #fbfbfb; font-size: 12px; color: #2384c2; padding: 20px 0 0 13px; white-space: nowrap; }
.act { height: 29px; display: flex; align-items: center; padding-left: 12px; }
.act span { margin-left: 11px; }
.act.sup { height: 31px; padding-bottom: 3px; }
.act.sup span { margin: 4px 0 0 12px; }
.act.sup svg { margin-bottom: 2px; }
.otp { height: 29px; margin-top: 4px; line-height: 30px; color: #254356; -webkit-text-stroke: .5px; }
.toc ul { margin-top: 4px; }
.toc li { height: 29px; line-height: 30px; padding-left: 12px; }
.toc .sel { height: 24px; line-height: 23px; margin: 3px 0 2px 2px; border-left: 4px solid #22cccb; padding-left: 10px; -webkit-text-stroke: .5px; }
```
